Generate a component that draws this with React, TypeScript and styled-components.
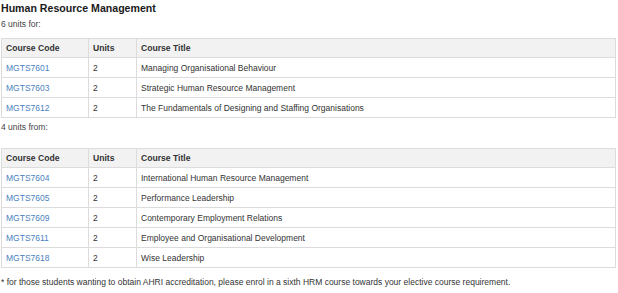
import React from 'react'
import styled, { createGlobalStyle } from 'styled-components'

const GlobalStyle = createGlobalStyle`
  body {
    margin: 0;
    background: #fff;
    font-family: "Liberation Sans", Arial, sans-serif;
    color: #333;
  }
`

const Page = styled.div`
  width: 618px;
  padding: 2px 2px 0 1px;
  box-sizing: border-box;
`

const Heading = styled.h2`
  margin: 0;
  font-size: 10.6px;
  line-height: 13px;
  font-weight: bold;
  color: #1a1a1a;
`

const Lead = styled.p<{ $top: number, $bottom: number }>`
  margin: ${p => p.$top}px 0 ${p => p.$bottom}px 0;
  font-size: 8.5px;
  line-height: 11px;
  color: #444;
`

const Table = styled.table`
  width: 615px;
  border-collapse: collapse;
  table-layout: fixed;
  border: 1px solid #dcdcdc;
  font-size: 8.5px;
`

const Th = styled.th<{ $w?: number }>`
  width: ${p => (p.$w ? `${p.$w}px` : 'auto')};
  height: 19px;
  padding: 0 4px;
  text-align: left;
  font-weight: bold;
  font-size: 8.6px;
  color: #333;
  background: #f2f2f2;
  border: 1px solid #dcdcdc;
  box-sizing: border-box;
`

const Td = styled.td`
  height: 19px;
  padding: 0 4px;
  border: 1px solid #dcdcdc;
  color: #333;
  white-space: nowrap;
`

const CodeLink = styled.a`
  color: #4a7fc0;
  text-decoration: none;
`

const Note = styled.p`
  margin: 9px 0 0 0;
  font-size: 8.5px;
  line-height: 11px;
  color: #333;
`

interface Course {
  code: string
  units: number
  title: string
}

const core: Course[] = [
  { code: 'MGTS7601', units: 2, title: 'Managing Organisational Behaviour' },
  { code: 'MGTS7603', units: 2, title: 'Strategic Human Resource Management' },
  { code: 'MGTS7612', units: 2, title: 'The Fundamentals of Designing and Staffing Organisations' }
]

const electives: Course[] = [
  { code: 'MGTS7604', units: 2, title: 'International Human Resource Management' },
  { code: 'MGTS7605', units: 2, title: 'Performance Leadership' },
  { code: 'MGTS7609', units: 2, title: 'Contemporary Employment Relations' },
  { code: 'MGTS7611', units: 2, title: 'Employee and Organisational Development' },
  { code: 'MGTS7618', units: 2, title: 'Wise Leadership' }
]

function CourseTable ({ courses }: { courses: Course[] }): JSX.Element {
  return (
    <Table>
      <thead>
        <tr>
          <Th $w={87}>Course Code</Th>
          <Th $w={48}>Units</Th>
          <Th>Course Title</Th>
        </tr>
      </thead>
      <tbody>
        {courses.map(c => (
          <tr key={c.code}>
            <Td><CodeLink href='#'>{c.code}</CodeLink></Td>
            <Td>{c.units}</Td>
            <Td>{c.title}</Td>
          </tr>
        ))}
      </tbody>
    </Table>
  )
}

export default function App (): JSX.Element {
  return (
    <Page>
      <GlobalStyle />
      <Heading>Human Resource Management</Heading>
      <Lead $top={4} $bottom={8}>6 units for:</Lead>
      <CourseTable courses={core} />
      <Lead $top={4} $bottom={15}>4 units from:</Lead>
      <CourseTable courses={electives} />
      <Note>* for those students wanting to obtain AHRI accreditation, please enrol in a sixth HRM course towards your elective course requirement.</Note>
    </Page>
  )
}
